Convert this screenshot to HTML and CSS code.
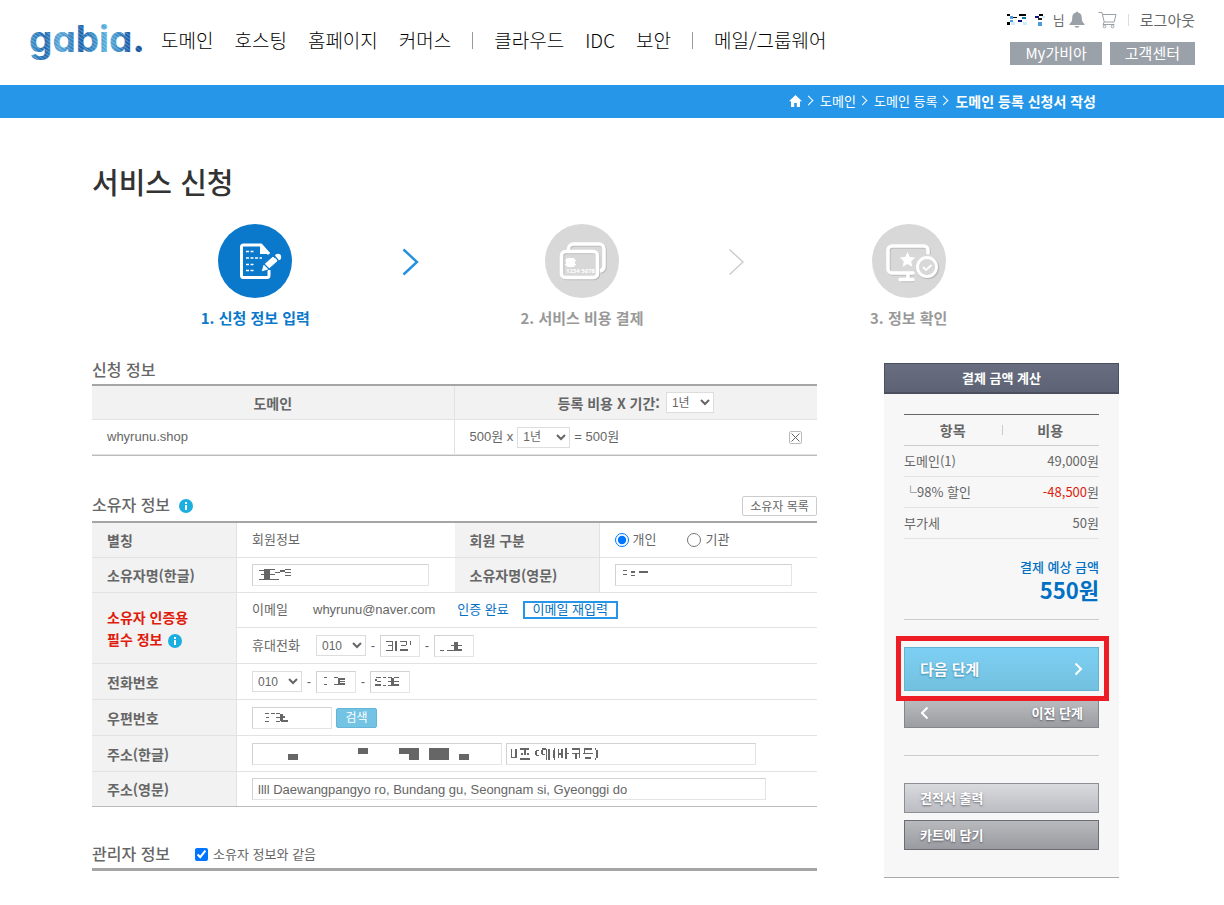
FILE: index.html
```html
<!DOCTYPE html>
<html lang="ko">
<head>
<meta charset="utf-8">
<title>도메인 등록 신청서 작성</title>
<link rel="stylesheet" href="styles.css">
</head>
<body>
<header class="top">
  <a class="logo" href="#" aria-label="gabia.">
    <svg width="120" height="54" viewBox="0 0 120 54">
      <defs>
        <linearGradient id="ink" x1="0" y1="0" x2="1" y2="0">
          <stop offset="0" stop-color="#3f97cf"/><stop offset=".14" stop-color="#1f67ad"/><stop offset=".26" stop-color="#59a9da"/>
          <stop offset=".45" stop-color="#1b62ab"/><stop offset=".68" stop-color="#58b4e0"/><stop offset=".86" stop-color="#1c5fa8"/><stop offset="1" stop-color="#0b4a97"/>
        </linearGradient>
        <pattern id="mesh" width="3" height="3" patternUnits="userSpaceOnUse" patternTransform="rotate(35)">
          <path d="M0 0H3" stroke="#fff" stroke-width="1" opacity=".55"/>
        </pattern>
      </defs>
      <text class="logo-text" x="0" y="40" fill="url(#ink)">gabia.</text>
      <text class="logo-text" x="0" y="40" fill="url(#mesh)" aria-hidden="true">gabia.</text>
    </svg>
  </a>
  <nav class="gnb">
    <a href="#">도메인</a><a href="#">호스팅</a><a href="#">홈페이지</a><a href="#">커머스</a>
    <span class="bar"></span>
    <a href="#">클라우드</a><a href="#">IDC</a><a href="#">보안</a>
    <span class="bar"></span>
    <a href="#">메일/그룹웨어</a>
  </nav>
  <div class="util">
    <div class="user">
      <svg width="44" height="14" viewBox="0 0 44 14" aria-hidden="true">
        <path d="M0 1h3v2h-3zM0 9h3v3h-3zM12 1h7v2h-7zM6 4h4v1h-4zM32 1h4v2h-4z" fill="#000"/>
        <path d="M3 3h3v3h-3zM3 7h3v2h-3zM31 9h4v4h-4z" fill="#4a9be0"/>
        <path d="M11 7h4v2h-4zM28 3h4v2h-4z" fill="#12127c"/>
        <path d="M15 4h4v2h-4z" fill="#0d78b8"/><path d="M31 5h4v2h-4z" fill="#222"/>
        <path d="M4 9h4v3h-4zM16 9h4v3h-4zM35 3h3v2h-3z" fill="#c8f0fa"/>
      </svg>
      <span class="nim">님</span>
      <svg class="bell" width="16" height="18" viewBox="0 0 16 18"><path fill="#9ba1a9" d="M7 1.500a1 1 0 0 1 2 0C12 2.200 12.800 4.500 12.800 7c0 3 .7 4.500 2.700 6v1H.5v-1c2-1.500 2.700-3 2.700-6 0-2.500.8-4.800 3.800-5.500zM5.700 15h4.600a2.300 1.800 0 0 1-4.600 0z"/></svg>
      <svg class="cart" width="19" height="18" viewBox="0 0 19 18" fill="none" stroke="#9ba1a9"><path d="M.5 1.500H4L6.200 11h10M4.800 3.500H18L16.200 11M6.200 11l-1.200 2.500h11.500"/><circle cx="6.500" cy="15.500" r="1.300"/><circle cx="14.500" cy="15.500" r="1.300"/></svg>
      <span class="sep"></span>
      <a href="#">로그아웃</a>
    </div>
    <div class="quick"><a href="#">My가비아</a><a href="#">고객센터</a></div>
  </div>
</header>

<div class="crumb-bar">
  <nav class="crumbs">
    <a href="#" aria-label="홈"><svg width="13" height="12" viewBox="0 0 13 12"><path fill="#fff" d="M6.500 0L13 6.300h-2V12H7.800V8H5.200v4H2V6.300H0z"/></svg></a>
    <i></i><a href="#">도메인</a><i></i><a href="#">도메인 등록</a><i></i><strong>도메인 등록 신청서 작성</strong>
  </nav>
</div>

<main class="wrap">
  <h1>서비스 신청</h1>
  <ol class="steps">
    <li class="step on">
      <div class="step-body">
        <svg width="74" height="74" viewBox="0 0 74 74">
          <circle cx="37" cy="37" r="37" fill="#0a78cb"/>
          <path d="M51 30V30L43 21H25.500a2 2 0 0 0-2 2V51.500a2 2 0 0 0 2 2H49a2 2 0 0 0 2-2V46" fill="none" stroke="#fff" stroke-width="3"/>
          <path d="M42 20l10 10H42z" fill="#fff"/>
          <path d="M28 27.500h8M28 34h16M28 40.500h8M28 46.500h8" stroke="#fff" stroke-width="1.500" stroke-dasharray="3 1.500"/>
          <path d="M43 48l2-7 10-9 5 5-10 9z" fill="#fff" stroke="#0a78cb"/><circle cx="60" cy="33" r="3.200" fill="#fff"/><path d="M55 30.500l5 5.500M46 40l5 5" stroke="#0a78cb" stroke-width="1.200"/>
        </svg>
        <span>1. 신청 정보 입력</span>
      </div>
      <svg class="next-mark" width="17" height="28" viewBox="0 0 17 28"><path d="M1.500 1.500L15 14L1.500 26.500" fill="none" stroke="#2490df" stroke-width="2.400"/></svg>
    </li>
    <li class="step">
      <div class="step-body">
        <svg width="74" height="74" viewBox="0 0 74 74">
          <circle cx="37" cy="37" r="37" fill="#d8d8d8"/>
          <g fill="none" stroke="#bcbcbc" stroke-width="3.500" transform="translate(1 1)"><path d="M23.500 26v-1a5 5 0 0 1 5-5H54a5 5 0 0 1 5 5V42a5 5 0 0 1-4 5"/><rect x="16.500" y="27.500" width="36" height="26" rx="4"/></g>
          <g fill="none" stroke="#fff" stroke-width="3.500"><path d="M23.500 26v-1a5 5 0 0 1 5-5H54a5 5 0 0 1 5 5V42a5 5 0 0 1-4 5"/><rect x="16.500" y="27.500" width="36" height="26" rx="4"/></g>
          <rect x="21" y="34" width="9" height="9" rx="2" fill="#fff"/><path d="M20 36.500h11M20 40.500h11" stroke="#fff"/>
          <text x="21" y="49" fill="#fff" class="card-no">1234 5678</text>
        </svg>
        <span>2. 서비스 비용 결제</span>
      </div>
      <svg class="next-mark" width="17" height="28" viewBox="0 0 17 28"><path d="M1.500 1.500L15 14L1.500 26.500" fill="none" stroke="#ccc" stroke-width="1.400"/></svg>
    </li>
    <li class="step">
      <div class="step-body">
        <svg width="74" height="74" viewBox="0 0 74 74">
          <circle cx="37" cy="37" r="37" fill="#d8d8d8"/>
          <g fill="none" stroke="#bcbcbc" stroke-width="3.500" transform="translate(1 1)"><path d="M41 49H20a4 4 0 0 1-4-4V26a4 4 0 0 1 4-4H52a4 4 0 0 1 4 4V29M36 49v6M28 55.500H41"/><circle cx="55" cy="43" r="9.500"/></g>
          <g fill="none" stroke="#fff" stroke-width="3.500"><path d="M41 49H20a4 4 0 0 1-4-4V26a4 4 0 0 1 4-4H52a4 4 0 0 1 4 4V29M36 49v6M28 55.500H41" stroke-linecap="round"/></g>
          <circle cx="55" cy="43" r="9.500" fill="#d8d8d8" stroke="#fff" stroke-width="2.800"/>
          <path d="M51 43l3 3 5.500-5" fill="none" stroke="#fff" stroke-width="1.800"/>
          <path d="M35.500 28l2.300 5 5.400.6-4 3.700 1.100 5.400-4.800-2.700-4.800 2.700 1.100-5.400-4-3.700 5.400-.6z" fill="#fff"/>
        </svg>
        <span>3. 정보 확인</span>
      </div>
    </li>
  </ol>

  <div class="cols">
    <form class="forms">
      <section>
        <div class="head"><h2>신청 정보</h2></div>
        <table class="grid domains">
          <tr><th>도메인</th><th><div class="line center"><label for="all">등록 비용 X 기간:</label><select id="all" class="w48"><option>1년</option></select></div></th></tr>
          <tr><td>whyrunu.shop</td><td><div class="line">
            <span>500원 x</span><select class="w53" aria-label="등록 기간"><option>1년</option></select><span>= 500원</span>
            <button type="button" class="del" aria-label="삭제"><svg width="9" height="9" viewBox="0 0 9 9"><path d="M.5.500l8 8M8.500.5l-8 8" stroke="#666"/></svg></button>
          </div></td></tr>
        </table>
      </section>

      <section>
        <div class="head tools"><h2>소유자 정보</h2>
          <svg class="info" width="14" height="14" viewBox="0 0 14 14"><circle cx="7" cy="7" r="7" fill="#1baee0"/><path d="M6 3h2v2H6zM6 6h2v5H6z" fill="#fff"/></svg>
          <button type="button" class="list-btn">소유자 목록</button></div>
        <table class="grid owner">
          <colgroup><col class="c-th"><col><col class="c-th"><col></colgroup>
          <tr><th>별칭</th><td>회원정보</td><th>회원 구분</th><td><div class="line radios">
            <label><input type="radio" name="kind" checked>개인</label><label><input type="radio" name="kind">기관</label></div></td></tr>
          <tr><th><label for="ko">소유자명(한글)</label></th>
            <td><div class="field w177"><input type="text" id="ko"><svg width="60" height="20"><path d="M6 5h5v1h-5zM8 9h4v1h-4zM6 14h5v1h-5zM11 4h6v11h-6zM17 4h5v1h-5zM17 9h5v1h-5zM17 14h9v1h-9zM22 7h5v1h-5zM27 5h5v2h-5zM32 4h6v1h-6zM32 7h6v1h-6zM32 10h6v1h-6z"/></svg></div></td>
            <th><label for="en">소유자명(영문)</label></th>
            <td><div class="field w177"><input type="text" id="en"><svg width="60" height="20"><path d="M7 5h4v1h-4zM7 9h4v1h-4zM15 6h4v2h-4zM15 10h4v1h-4zM23 6h9v2h-9z"/></svg></div></td></tr>
          <tr><th rowspan="2" class="need">소유자 인증용<br>필수 정보 <svg class="info" width="14" height="14" viewBox="0 0 14 14"><circle cx="7" cy="7" r="7" fill="#1baee0"/><path d="M6 3h2v2H6zM6 6h2v5H6z" fill="#fff"/></svg></th>
            <td colspan="3"><div class="line mail"><span class="sub">이메일</span><span class="addr">whyrunu@naver.com</span><span class="ok">인증 완료</span><button type="button" class="again">이메일 재입력</button></div></td></tr>
          <tr class="tall"><td colspan="3"><div class="line tel"><label class="sub" for="m1">휴대전화</label>
            <select id="m1" class="w50"><option>010</option></select><span class="dash">-</span>
            <div class="field w40"><input type="text" aria-label="휴대전화 가운데 자리"><svg width="38" height="20"><path d="M5 5h7v1h-7zM7 9h5v1h-5zM5 14h7v1h-7zM11 5h1v10h-1zM14 5h2v10h-2zM19 5h6v1h-6zM20 9h5v1h-5zM19 13h8v2h-8zM25 5h1v4h-1zM29 5h1v4h-1z"/></svg></div><span class="dash">-</span>
            <div class="field w40"><input type="text" aria-label="휴대전화 끝자리"><svg width="38" height="20"><path d="M5 14h4v1h-4zM12 14h7v1h-7zM16 9h11v1h-11zM19 6h4v9h-4zM23 13h4v2h-4z"/></svg></div></div></td></tr>
          <tr class="tall"><th><label for="t1">전화번호</label></th><td colspan="3"><div class="line tel">
            <select id="t1" class="w50"><option>010</option></select><span class="dash">-</span>
            <div class="field w40"><input type="text" aria-label="전화번호 가운데 자리"><svg width="38" height="20"><path d="M7 5h3v1h-3zM7 12h3v1h-3zM17 5h4v1h-4zM17 12h4v1h-4zM21 6h2v7h-2zM23 6h5v2h-5zM23 9h5v1h-5zM22 11h6v2h-6z"/></svg></div><span class="dash">-</span>
            <div class="field w40"><input type="text" aria-label="전화번호 끝자리"><svg width="38" height="20"><path d="M5 5h5v1h-5zM4 7h2v2h-2zM6 9h4v1h-4zM4 12h6v2h-6zM12 5h3v1h-3zM12 13h3v1h-3zM17 5h4v1h-4zM17 9h4v1h-4zM17 13h4v1h-4zM20 6h3v8h-3zM23 5h5v1h-5zM23 9h5v1h-5zM23 12h5v2h-5z"/></svg></div></div></td></tr>
          <tr class="tall"><th><label for="zip">우편번호</label></th><td colspan="3"><div class="line zip">
            <div class="field w80"><input type="text" id="zip"><svg width="60" height="20"><path d="M12 5h4v1h-4zM13 9h3v1h-3zM12 13h4v1h-4zM18 5h4v1h-4zM23 5h4v1h-4zM23 9h4v1h-4zM23 13h4v1h-4zM27 6h3v7h-3zM30 8h2v2h-2zM28 12h7v2h-7z"/></svg></div>
            <button type="button" class="find">검색</button></div></td></tr>
          <tr class="tall"><th><label for="a1">주소(한글)</label></th><td colspan="3"><div class="line zip">
            <div class="field w250"><input type="text" id="a1"><svg width="230" height="20"><path d="M35 10h10v6h-10zM105 4h10v6h-10zM146 4h20v12h-10v-6h-10zM176 4h20v12h-20zM206 10h10v6h-10z"/></svg></div>
            <div class="field w250"><input type="text" aria-label="상세 주소"><svg width="120" height="20"><path d="M4 5h1v9h-1zM4 13h5v1h-5zM8 5h2v9h-2zM13 4h9v2h-9zM17 6h2v5h-2zM14 9h2v2h-2zM20 9h2v2h-2zM13 14h10v2h-10zM29 6h3v1h-3zM28 7h2v4h-2zM29 11h3v1h-3zM35 4h4v2h-4zM34 6h2v4h-2zM39 5h1v11h-1zM41 5h2v11h-2zM35 10h3v1h-3zM46 6h2v8h-2zM47 4h1v2h-1zM47 14h1v2h-1zM51 5h1v9h-1zM54 5h2v9h-2zM51 9h5v2h-5zM58 4h2v11h-2zM60 9h2v1h-2zM65 4h8v2h-8zM72 6h1v8h-1zM65 9h8v1h-8zM68 10h2v5h-2zM77 4h8v2h-8zM77 6h1v3h-1zM76 9h10v1h-10zM78 13h6v2h-6zM88 4h1v2h-1zM89 6h2v8h-2zM88 14h1v2h-1z"/></svg></div></div></td></tr>
          <tr><th><label for="a2">주소(영문)</label></th><td colspan="3"><div class="field w514"><input type="text" id="a2" value="llll Daewangpangyo ro, Bundang gu, Seongnam si, Gyeonggi do"></div></td></tr>
        </table>
      </section>

      <section>
        <div class="head admin"><h2>관리자 정보</h2><label><input type="checkbox" checked>소유자 정보와 같음</label></div>
      </section>
    </form>

    <aside class="calc">
      <h2>결제 금액 계산</h2>
      <div class="calc-body">
        <table class="bill">
          <tr><th>항목</th><th>비용</th></tr>
          <tr><td>도메인(1)</td><td>49,000원</td></tr>
          <tr><td>└98% 할인</td><td><em>-48,500</em>원</td></tr>
          <tr><td>부가세</td><td>50원</td></tr>
        </table>
        <div class="total"><span>결제 예상 금액</span><strong>550원</strong></div>
        <div class="group moves">
          <div class="focus"><button type="button" class="go">다음 단계<svg width="9" height="14" viewBox="0 0 9 14"><path d="M1.500 1.500L7 7l-5.500 5.500" fill="none" stroke="#fff" stroke-width="2"/></svg></button></div>
          <button type="button" class="back"><svg width="9" height="14" viewBox="0 0 9 14"><path d="M7.500 1.500L2 7l5.500 5.500" fill="none" stroke="#fff" stroke-width="2"/></svg>이전 단계</button>
        </div>
        <div class="group extras">
          <button type="button" class="quote">견적서 출력</button>
          <button type="button" class="to-cart">카트에 담기</button>
        </div>
      </div>
    </aside>
  </div>
</main>
</body>
</html>
```
FILE: styles.css
```css
* { box-sizing: border-box; }
body { margin: 0; background: #fff; color: #666; font: 13px/20px "Noto Sans CJK KR", sans-serif; }
a { color: inherit; text-decoration: none; }
h1, h2, ol { margin: 0; padding: 0; }
svg { display: block; flex: none; }
button, input, select { font: inherit; color: inherit; margin: 0; }
button { padding: 0; cursor: pointer; white-space: nowrap; }

.top { display: flex; align-items: flex-start; height: 85px; padding: 0 29px 0 29px; }
.logo { margin-top: 12px; }
.logo-text { font: 700 37px Inter, sans-serif; font-feature-settings: "cv11"; }
.gnb { display: flex; align-items: center; gap: 21px; margin: 25px 0 0 12px; font-size: 19px; line-height: 30px; font-weight: 300; color: #000; white-space: nowrap; }
.bar { width: 1px; height: 17px; background: #999; }
.util { margin: 10px 0 0 auto; }
.user { display: flex; align-items: center; justify-content: flex-end; font-size: 15px; height: 20px; }
.nim { font-size: 13px; margin: 0 4px 0 2px; }
.cart { margin-left: 13px; }
.sep { width: 1px; height: 12px; background: #ddd; margin: 0 11px; }
.quick { display: flex; justify-content: flex-end; gap: 8px; margin-top: 12px; }
.quick a { padding: 0 15px; height: 23px; line-height: 22px; font-size: 15px; color: #fff; background: #9ba1a9; }

.crumb-bar { background: #2697e8; color: #fff; }
.crumbs { display: flex; align-items: center; justify-content: flex-end; max-width: 1040px; height: 33px; margin: 0 auto; padding: 0 36px 2px 0; }
.crumbs i { width: 7px; height: 7px; margin: 0 8px 0 3px; border: solid #fff; border-width: 1px 1px 0 0; transform: rotate(45deg); }
.crumbs strong { font-size: 14px; }

.wrap { max-width: 1040px; margin: 0 auto; padding: 43px 0 27px; }
h1 { font-size: 29px; line-height: 40px; font-weight: 500; color: #333; }
.steps { display: grid; grid-template-columns: repeat(3, 1fr); margin: 23px 60px 0 0; list-style: none; }
.step { display: grid; grid-template-columns: 1fr auto 1fr; color: #999; }
.step-body { grid-column: 2; display: flex; flex-direction: column; align-items: center; gap: 10px; font-size: 15px; font-weight: 700; }
.on { color: #0a78cb; }
.next-mark { grid-column: 3; justify-self: end; margin-top: 24px; }
.card-no { font: 700 6px "Noto Sans", sans-serif; }

.cols { display: grid; grid-template-columns: minmax(0, 1fr) 235px; column-gap: 67px; align-items: start; margin-top: 26px; padding-right: 13px; }
section + section { margin-top: 31px; }
.head { display: flex; align-items: center; height: 32px; border-bottom: 2px solid #a5a5a5; }
.head h2 { font-size: 16px; font-weight: 500; }
.tools { height: 36px; }
.tools .info { margin: 4px 0 0 9px; }
.list-btn { margin: 4px 0 0 auto; width: 75px; height: 20px; line-height: 18px; font-size: 12px; background: #fff; border: 1px solid #ccc; border-radius: 2px; }
.admin { height: 33px; border-width: 3px; }
.admin label { display: flex; align-items: center; gap: 5px; margin: 2px 0 0 25px; }
.admin input { width: 13px; height: 13px; }

.grid { width: 100%; table-layout: fixed; border-spacing: 0; border-bottom: 1px solid #bbb; }
.grid th, .grid td { height: 35px; padding: 0 0 0 15px; border-bottom: 1px solid #e2e2e2; text-align: left; }
.grid td { font-family: "Liberation Sans", "Noto Sans CJK KR", sans-serif; }
.grid th { font-size: 14px; font-weight: 700; background: #f2f2f2; border-right: 1px solid #e2e2e2; }
.owner tr:last-child th, .owner tr:last-child td { border-bottom: 0; }
.owner tr:last-child th, .owner tr:last-child td { height: 34px; }
.grid .tall th, .grid .tall td { height: 36px; }
.c-th { width: 145px; }
.domains th { height: 34px; padding: 0; text-align: center; }
.domains tr > :last-child { border-right: 0; }
.domains td { border-right: 1px solid #e2e2e2; }
.need.need { color: #e01b0c; line-height: 22px; }
.need .info { display: inline-block; vertical-align: -3px; margin-left: 2px; }
.line { display: flex; align-items: center; gap: 4px; white-space: nowrap; }
.center { justify-content: center; gap: 6px; }
.line select { height: 21px; padding: 0 0 0 1px; background: #fff; border: 1px solid #ddd; font-family: "Liberation Sans", "Noto Sans CJK KR", sans-serif; font-weight: 400; font-size: 12px; }
.del { display: grid; place-items: center; width: 13px; height: 13px; margin: 0 15px 0 auto; background: #fff; border: 1px solid #bbb; border-radius: 2px; }
.radios { gap: 31px; }
.radios label { display: flex; align-items: center; gap: 4px; }
.radios input { width: 14px; height: 14px; }
.mail { gap: 0; }
.mail .sub { width: 61px; }
.ok { margin: 0 14px 0 22px; color: #0070c4; }
.again { width: 95px; height: 18px; line-height: 14px; background: #fff; border: 2px solid #2697e8; color: #0070c4; }
.tel { gap: 0; }
.tel .sub { width: 64px; }
.dash { width: 14px; text-align: center; }
.field { position: relative; }
.field input { display: block; width: 100%; height: 22px; padding: 0 5px; background: #fff; border: 1px solid #e4e4e4; border-color: #d2d2d2 #e4e4e4 #e4e4e4 #d2d2d2; }
.field svg { position: absolute; left: 1px; top: 1px; fill: #666; pointer-events: none; }
.w40 { width: 40px; }
.w48 { width: 48px; }
.w50 { width: 50px; }
.w53 { width: 53px; }
.w80 { width: 80px; }
.w177 { width: 177px; }
.w250 { width: 250px; }
.w514 { width: 514px; }
.find { width: 41px; height: 20px; line-height: 18px; font-size: 12px; color: #fff; background: #73c3e4; border: 1px solid #64b5d8; border-radius: 2px; }

.calc { margin-top: 9px; background: #f7f7f7; border-bottom: 1px solid #aaa; }
.calc h2 { height: 31px; line-height: 28px; text-align: center; font-size: 13px; font-weight: 700; color: #fff; background: linear-gradient(#686e80, #5d6375); border: solid #4b5060; border-width: 1px 1px 2px; }
.calc-body { padding: 20px 20px 27px; }
.bill { width: 100%; border-spacing: 0; border-top: 1px solid #666; }
.bill th { position: relative; width: 50%; height: 31px; padding: 0; border-bottom: 1px solid #ccc; font-size: 14px; }
.bill th + th::before { content: ""; position: absolute; left: 0; top: 10px; width: 1px; height: 10px; background: #ccc; }
.bill td { height: 31px; padding: 0; border-bottom: 1px solid #e2e2e2; }
.bill td + td { text-align: right; }
.bill em { font-style: normal; color: #e01b0c; }
.total { display: flex; flex-direction: column; align-items: flex-end; padding: 18px 0; color: #0070c4; font-weight: 500; }
.total strong { font-size: 22px; line-height: 24px; }
.group { border-top: 1px solid #ccc; padding: 27px 0; }
.group button { display: flex; align-items: center; width: 100%; height: 30px; padding: 0 15px; font-weight: 700; color: #fff; text-shadow: 0 1px 2px rgba(60, 60, 70, .7); }
.focus { position: relative; margin-bottom: 7px; }
.focus::after { content: ""; position: absolute; inset: -11px -10px -10px -8px; border: 5px solid #ee1c25; pointer-events: none; }
.group .go { justify-content: space-between; height: 44px; font-size: 15px; background: linear-gradient(#7dd0f3, #73c0df); border: 1px solid #63b3d4; text-shadow: 0 1px 2px #3c87a8; }
.group .back { justify-content: space-between; background: linear-gradient(#bcbdc0, #9c9da2); border: 1px solid #85868b; }
.group.extras { padding-bottom: 0; }
.group .quote { margin-bottom: 7px; background: linear-gradient(#d9dadd, #bcbdc3); border: 1px solid #8e8f95; }
.group .to-cart { background: linear-gradient(#b9babd, #9a9ba1); border: 1px solid #6c6d73; }
```
